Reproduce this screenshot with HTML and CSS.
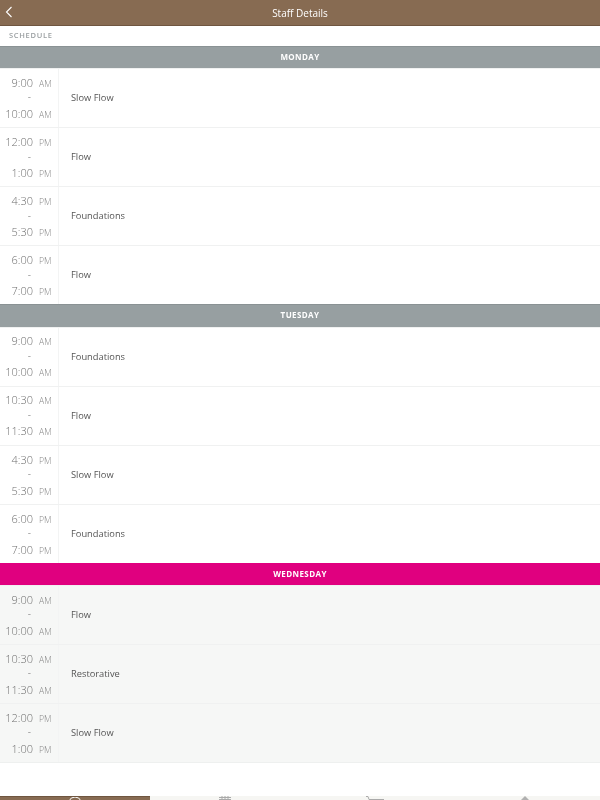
FILE: index.html
```html
<!DOCTYPE html>
<html lang="en">
<head>
<meta charset="utf-8">
<title>Staff Details</title>
<link rel="stylesheet" href="styles.css">
</head>
<body>
<div class="page">
  <header class="topbar">
    <svg class="back" width="8" height="12" viewBox="0 0 8 12"><path d="M6.5 1 L1.5 6 L6.5 11" fill="none" stroke="#fff" stroke-width="1.1"/></svg>
    <span class="title">Staff Details</span>
  </header>
  <div class="section">SCHEDULE</div>
  <main class="schedule">
    <div class="day">MONDAY</div>
    <div class="row"><div class="time"><div class="tl"><span class="t">9:00</span><span class="m">AM</span></div><div class="dash">-</div><div class="tl"><span class="t">10:00</span><span class="m">AM</span></div></div><div class="name">Slow Flow</div></div>
    <div class="row"><div class="time"><div class="tl"><span class="t">12:00</span><span class="m">PM</span></div><div class="dash">-</div><div class="tl"><span class="t">1:00</span><span class="m">PM</span></div></div><div class="name">Flow</div></div>
    <div class="row"><div class="time"><div class="tl"><span class="t">4:30</span><span class="m">PM</span></div><div class="dash">-</div><div class="tl"><span class="t">5:30</span><span class="m">PM</span></div></div><div class="name">Foundations</div></div>
    <div class="row"><div class="time"><div class="tl"><span class="t">6:00</span><span class="m">PM</span></div><div class="dash">-</div><div class="tl"><span class="t">7:00</span><span class="m">PM</span></div></div><div class="name">Flow</div></div>
    <div class="day">TUESDAY</div>
    <div class="row"><div class="time"><div class="tl"><span class="t">9:00</span><span class="m">AM</span></div><div class="dash">-</div><div class="tl"><span class="t">10:00</span><span class="m">AM</span></div></div><div class="name">Foundations</div></div>
    <div class="row"><div class="time"><div class="tl"><span class="t">10:30</span><span class="m">AM</span></div><div class="dash">-</div><div class="tl"><span class="t">11:30</span><span class="m">AM</span></div></div><div class="name">Flow</div></div>
    <div class="row"><div class="time"><div class="tl"><span class="t">4:30</span><span class="m">PM</span></div><div class="dash">-</div><div class="tl"><span class="t">5:30</span><span class="m">PM</span></div></div><div class="name">Slow Flow</div></div>
    <div class="row"><div class="time"><div class="tl"><span class="t">6:00</span><span class="m">PM</span></div><div class="dash">-</div><div class="tl"><span class="t">7:00</span><span class="m">PM</span></div></div><div class="name">Foundations</div></div>
    <div class="day today">WEDNESDAY</div>
    <div class="row cur"><div class="time"><div class="tl"><span class="t">9:00</span><span class="m">AM</span></div><div class="dash">-</div><div class="tl"><span class="t">10:00</span><span class="m">AM</span></div></div><div class="name">Flow</div></div>
    <div class="row cur"><div class="time"><div class="tl"><span class="t">10:30</span><span class="m">AM</span></div><div class="dash">-</div><div class="tl"><span class="t">11:30</span><span class="m">AM</span></div></div><div class="name">Restorative</div></div>
    <div class="row cur last"><div class="time"><div class="tl"><span class="t">12:00</span><span class="m">PM</span></div><div class="dash">-</div><div class="tl"><span class="t">1:00</span><span class="m">PM</span></div></div><div class="name">Slow Flow</div></div>
  </main>
  <nav class="tabs">
    <div class="tab active"><svg class="ico" width="16" height="4" viewBox="0 0 16 4"><path d="M2 4 A6.5 6.5 0 0 1 14 4" fill="none" stroke="#fff" stroke-width="1"/></svg></div>
    <div class="tab"><svg class="ico" width="12" height="4" viewBox="0 0 12 4"><path d="M0 1.5H12M0 3.5H12M3 0V4M6 0V4M9 0V4" fill="none" stroke="#aaa" stroke-width="1"/></svg></div>
    <div class="tab"><svg class="ico" width="18" height="4" viewBox="0 0 18 4"><path d="M0 .5H2L3 3.5H18" fill="none" stroke="#aaa" stroke-width="1"/></svg></div>
    <div class="tab"><svg class="ico" width="8" height="4" viewBox="0 0 8 4"><path d="M4 0L8 4H0Z" fill="#b0b0b0"/></svg></div>
  </nav>
</div>
</body>
</html>
```
FILE: styles.css
```css
* { box-sizing: border-box; }
html, body { margin: 0; padding: 0; }
body { font-family: "Open Sans", sans-serif; background: #fff; }
.page { width: 600px; height: 800px; display: flex; flex-direction: column; overflow: hidden; will-change: transform; }
.topbar { height: 26px; flex: none; background: #876b52; border-bottom: 1px solid #6f5640; display: flex; align-items: center; justify-content: center; position: relative; }
.back { position: absolute; left: 5px; top: 6px; }
.title { color: #fff; font-size: 10px; line-height: 26px; }
.section { height: 20px; flex: none; padding-left: 9px; font-size: 7.5px; font-weight: 600; letter-spacing: .7px; color: #999ea0; line-height: 19px; }
.schedule { flex: 1; min-height: 0; }
.day { height: 22.2px; background: #979fa1; border-top: 1px solid #8a9294; color: #fff; font-size: 8px; font-weight: 700; letter-spacing: .4px; text-align: center; line-height: 20.5px; }
.day.today { background: #e0007f; border-top-color: #e0007f; }
.row { height: 59.07px; display: flex; border-top: 1px solid #f0f1f1; background: #fff; }
.row.cur { background: #f6f7f6; }
.row.last { height: 60px; border-bottom: 1px solid #eef0ef; }
.time { width: 59px; flex: none; border-right: 1px solid #f3f4f4; display: flex; flex-direction: column; justify-content: center; padding: 0 7px 0 0; }
.tl { display: flex; justify-content: flex-end; align-items: baseline; height: 15.5px; line-height: 15.5px; }
.t { font-size: 11px; font-weight: 300; color: #707070; }
.m { font-size: 8.6px; font-weight: 300; color: #888; width: 12px; margin-left: 6px; white-space: nowrap; }
.dash { height: 15.5px; line-height: 15.5px; font-size: 10px; font-weight: 300; color: #666; text-align: right; padding-right: 20px; }
.name { font-size: 9.3px; color: #555; padding: 0 0 1px 12px; display: flex; align-items: center; }
.tabs { height: 4px; flex: none; display: flex; background: #f6f6f3; overflow: hidden; }
.tab { flex: 1; display: flex; justify-content: center; align-items: flex-start; }
.tab.active { background: #876b52; border-top: 1px solid #6f5640; }
.ico { display: block; }
```
